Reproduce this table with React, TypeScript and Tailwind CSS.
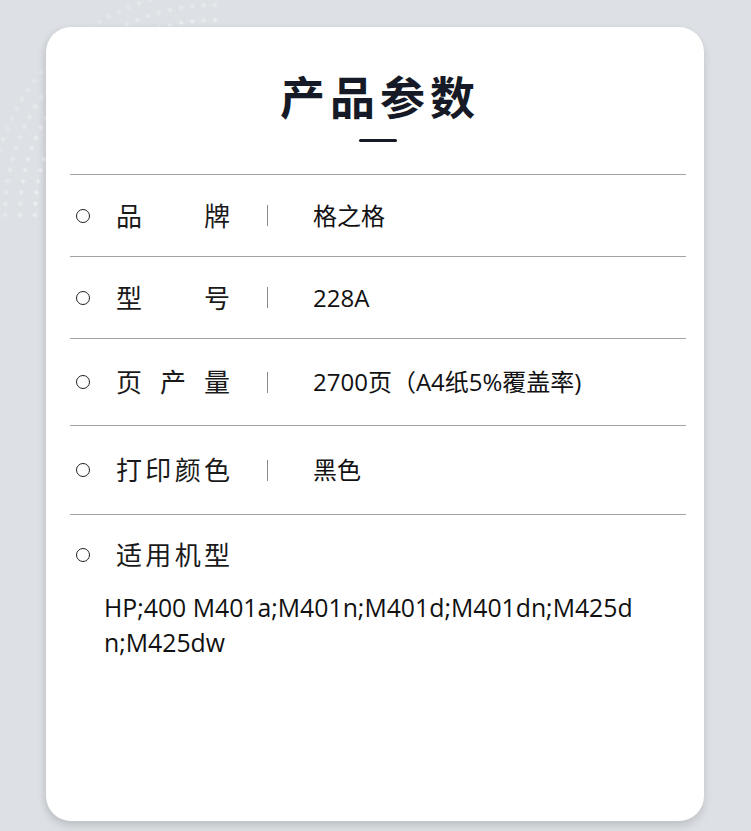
const rows = [
  { label: "品牌", value: "格之格", h: "h-[82px]" },
  { label: "型号", value: "228A", h: "h-[82px]" },
  { label: "页产量", value: "2700页（A4纸5%覆盖率)", h: "h-[87px]" },
  { label: "打印颜色", value: "黑色", h: "h-[89px]" },
];

function Dots() {
  // faint concentric arcs of diamond dots in the top-left corner
  const dots: { x: number; y: number; o: number }[] = [];
  const cx = 215;
  const cy = 215;
  for (let r = 135; r <= 235; r += 15) {
    const steps = Math.floor((Math.PI / 2) * r / 11);
    for (let i = 0; i <= steps; i++) {
      const a = Math.PI + (i / steps) * (Math.PI / 2);
      const x = cx + r * Math.cos(a);
      const y = cy + r * Math.sin(a);
      if (x < -4 || y < -4) continue;
      dots.push({ x, y, o: 0.55 - (r - 135) / 260 });
    }
  }
  return (
    <svg className="pointer-events-none absolute left-0 top-0" width="260" height="260">
      {dots.map((d, i) => (
        <rect
          key={i}
          x={d.x - 2}
          y={d.y - 2}
          width="4"
          height="4"
          fill="#ffffff"
          opacity={d.o}
          transform={`rotate(45 ${d.x} ${d.y})`}
        />
      ))}
    </svg>
  );
}

function Ring() {
  return <span className="h-[14px] w-[14px] shrink-0 rounded-full border-[1.5px] border-[#222]" />;
}

function Label({ text }: { text: string }) {
  return (
    <span className="flex w-[114px] justify-between text-[26px] leading-none text-[#1a1a1a]">
      {text.split("").map((c, i) => (
        <span key={i}>{c}</span>
      ))}
    </span>
  );
}

export default function App() {
  return (
    <div
      className="relative min-h-[831px] overflow-hidden bg-[#dde1e5] pb-[11px] pl-[46px] pr-[47px] pt-[27px]"
      style={{ fontFamily: '"Open Sans", "Noto Sans CJK SC", sans-serif' }}
    >
      <Dots />
      <div className="relative h-[794px] rounded-[25px] bg-white pl-[24px] pr-[18px] pt-[48px] shadow-[0_5px_8px_rgba(0,0,0,0.13),-3px_0_6px_rgba(0,0,0,0.04)]">
        <div className="flex flex-col items-center">
          <h1 className="pl-[4px] text-[45px] font-bold leading-none tracking-[5px] text-[#161a26]">
            产品参数
          </h1>
          <div className="mt-[19px] h-[3px] w-[38px] rounded-full bg-[#161a26]" />
        </div>

        <div className="mt-[32px] border-t border-[#a3a3a3]">
          {rows.map((r) => (
            <div key={r.label} className={`flex items-center border-b border-[#a3a3a3] ${r.h}`}>
              <span className="ml-[6px] mr-[26px] flex">
                <Ring />
              </span>
              <Label text={r.label} />
              <span className="ml-[37px] h-[21px] w-px bg-[#888]" />
              <span className="ml-[45px] text-[24px] leading-none text-[#111]">{r.value}</span>
            </div>
          ))}
        </div>

        <div className="flex items-center pt-[27px]">
          <span className="ml-[6px] mr-[26px] flex">
            <Ring />
          </span>
          <Label text="适用机型" />
        </div>
        <p className="mt-[22px] w-[569px] pl-[34px] text-[24.8px] leading-[35px] text-[#111] [word-break:break-all]">
          HP;400 M401a;M401n;M401d;M401dn;M425dn;M425dw
        </p>
      </div>
    </div>
  );
}
